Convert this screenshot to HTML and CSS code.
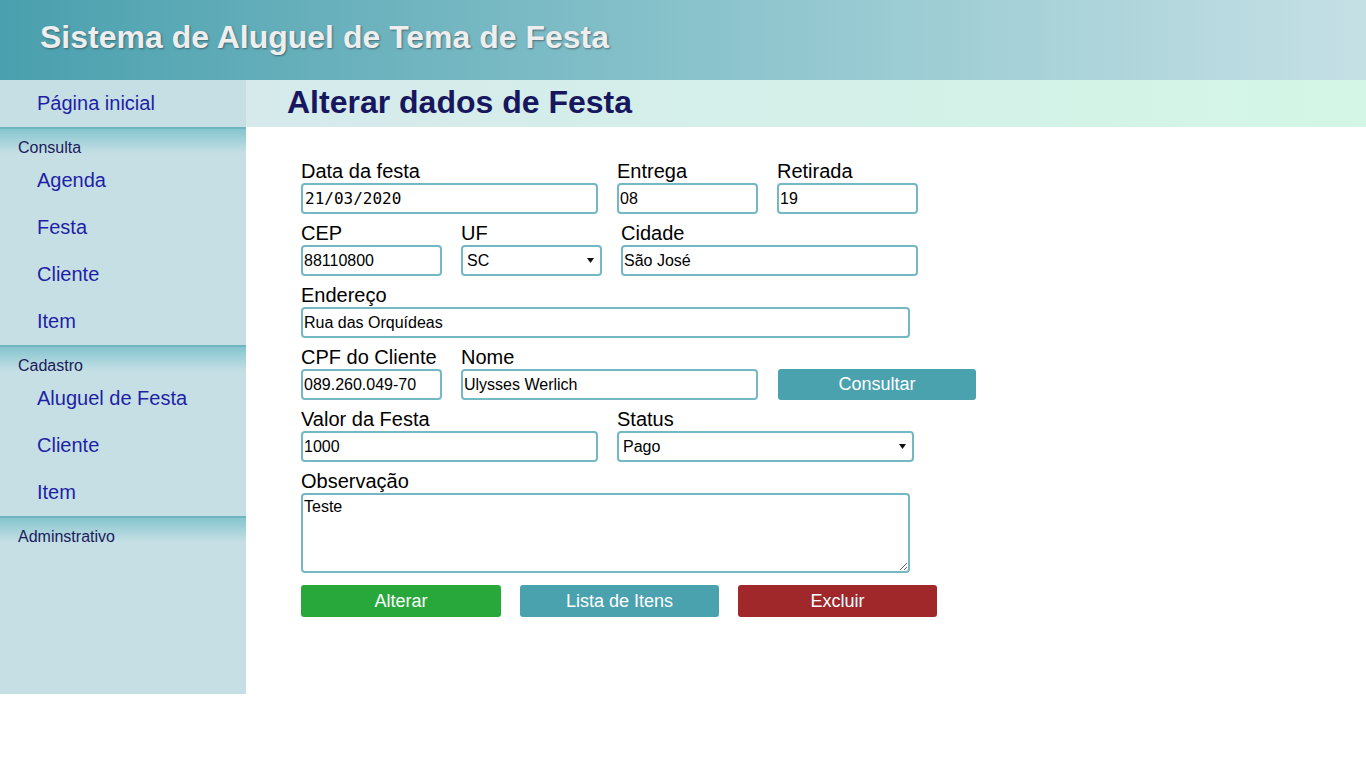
FILE: index.html
```html
<!DOCTYPE html>
<html lang="pt-BR">
<head>
<meta charset="utf-8">
<title>Alterar dados de Festa</title>
<link rel="stylesheet" href="styles.css">
</head>
<body>
<header class="topbar">
  <h1 class="topbar-title">Sistema de Aluguel de Tema de Festa</h1>
</header>
<div class="layout">
  <nav class="sidebar">
    <a class="nav-link" href="#">Página inicial</a>
    <div class="nav-group">Consulta</div>
    <a class="nav-link" href="#">Agenda</a>
    <a class="nav-link" href="#">Festa</a>
    <a class="nav-link" href="#">Cliente</a>
    <a class="nav-link" href="#">Item</a>
    <div class="nav-group">Cadastro</div>
    <a class="nav-link" href="#">Aluguel de Festa</a>
    <a class="nav-link" href="#">Cliente</a>
    <a class="nav-link" href="#">Item</a>
    <div class="nav-group">Adminstrativo</div>
  </nav>
  <main class="content">
    <div class="page-title"><h2>Alterar dados de Festa</h2></div>
    <form class="form">
      <div class="row">
        <div class="field w-wide"><label>Data da festa</label><input class="input mono" type="text" value="21/03/2020"></div>
        <div class="field w-small"><label>Entrega</label><input class="input" type="text" value="08"></div>
        <div class="field w-small"><label>Retirada</label><input class="input" type="text" value="19"></div>
      </div>
      <div class="row">
        <div class="field w-small"><label>CEP</label><input class="input" type="text" value="88110800"></div>
        <div class="field w-small"><label>UF</label>
          <div class="select-wrap">
            <select class="input select"><option>SC</option></select>
            <svg class="select-arrow" width="7" height="5" viewBox="0 0 7 5"><path d="M0 0H7L3.5 5Z" fill="#111"/></svg>
          </div>
        </div>
        <div class="field w-wide"><label>Cidade</label><input class="input" type="text" value="São José"></div>
      </div>
      <div class="row">
        <div class="field w-full"><label>Endereço</label><input class="input" type="text" value="Rua das Orquídeas"></div>
      </div>
      <div class="row">
        <div class="field w-small"><label>CPF do Cliente</label><input class="input" type="text" value="089.260.049-70"></div>
        <div class="field w-wide"><label>Nome</label><input class="input" type="text" value="Ulysses Werlich"></div>
        <button type="button" class="btn btn-teal btn-consult">Consultar</button>
      </div>
      <div class="row">
        <div class="field w-wide"><label>Valor da Festa</label><input class="input" type="text" value="1000"></div>
        <div class="field w-wide"><label>Status</label>
          <div class="select-wrap">
            <select class="input select"><option>Pago</option></select>
            <svg class="select-arrow" width="7" height="5" viewBox="0 0 7 5"><path d="M0 0H7L3.5 5Z" fill="#111"/></svg>
          </div>
        </div>
      </div>
      <div class="row">
        <div class="field w-full"><label>Observação</label><textarea class="input textarea">Teste</textarea></div>
      </div>
      <div class="row actions">
        <button type="button" class="btn btn-green">Alterar</button>
        <button type="button" class="btn btn-teal">Lista de Itens</button>
        <button type="button" class="btn btn-red">Excluir</button>
      </div>
    </form>
  </main>
</div>
</body>
</html>
```

FILE: styles.css
```css
* { box-sizing: border-box; }

body {
  margin: 0;
  font-family: "Liberation Sans", Arial, sans-serif;
  background: #ffffff;
  color: #000;
}

.topbar {
  height: 80px;
  padding: 0 40px 5px;
  display: flex;
  align-items: center;
  background: linear-gradient(to right, #4aa0ae, #88c2cb 50%, #c5e0e5);
}

.topbar-title {
  margin: 0;
  font-size: 32px;
  font-weight: bold;
  color: #eeeeee;
  text-shadow: 1px 1px 2px rgba(40, 60, 70, 0.6);
}

.layout {
  display: flex;
  align-items: flex-start;
}

.sidebar {
  width: 246px;
  flex: 0 0 246px;
  height: 614px;
  background: #c5dfe4;
  display: flex;
  flex-direction: column;
}

.nav-link {
  height: 47px;
  display: flex;
  align-items: center;
  padding-left: 37px;
  font-size: 20px;
  color: #1f1fa6;
  text-decoration: none;
}

.nav-group {
  height: 30px;
  padding: 10px 18px 0;
  line-height: 18px;
  font-size: 16px;
  color: #1b1b5c;
  border-top: 2px solid #70b6c1;
  background: linear-gradient(#86c5cf, #c5dfe4 24px);
}

.content {
  flex: 1;
}

.page-title {
  height: 47px;
  display: flex;
  align-items: center;
  padding-left: 41px;
  padding-bottom: 2px;
  background: linear-gradient(to right, #d6eaec, #d3f6e6);
}

.page-title h2 {
  margin: 0;
  font-size: 32px;
  font-weight: bold;
  color: #17175f;
}

.form {
  padding: 32px 0 0 55px;
}

.row {
  display: flex;
  align-items: flex-end;
  gap: 19px;
  margin-bottom: 7px;
}

.field {
  display: flex;
  flex-direction: column;
}

.field label {
  font-size: 20px;
  line-height: 24px;
  color: #000;
}

.w-wide { width: 297px; }
.w-small { width: 141px; }
.w-full { width: 609px; }

.input {
  height: 31px;
  width: 100%;
  border: 2px solid #73b8c3;
  border-radius: 4px;
  padding: 0 1px;
  font-family: "Liberation Sans", Arial, sans-serif;
  font-size: 16px;
  color: #000;
  background: #fff;
  outline: none;
}

.mono {
  font-family: "DejaVu Sans Mono", "Liberation Mono", monospace;
  font-size: 16px;
  padding-left: 2px;
}

.select-wrap {
  position: relative;
  width: 100%;
}

.select {
  display: block;
  appearance: none;
  -webkit-appearance: none;
  padding: 0 18px 0 4px;
}

.select-arrow {
  position: absolute;
  right: 8px;
  top: 13px;
  pointer-events: none;
}

.textarea {
  height: 80px;
  padding: 3px 1px 1px;
  resize: vertical;
}

.btn {
  height: 31px;
  border: none;
  border-radius: 3px;
  font-family: "Liberation Sans", Arial, sans-serif;
  font-size: 18px;
  color: #ffffff;
  width: 199px;
  cursor: pointer;
}

.btn-consult {
  width: 198px;
  margin-left: 1px;
}

.btn-green { background: #28a83b; width: 200px; }
.btn-teal { background: #4ba2af; }
.btn-red { background: #a0282a; }

.actions {
  margin-top: 12px;
  align-items: center;
}

.actions .btn { height: 32px; }
```
